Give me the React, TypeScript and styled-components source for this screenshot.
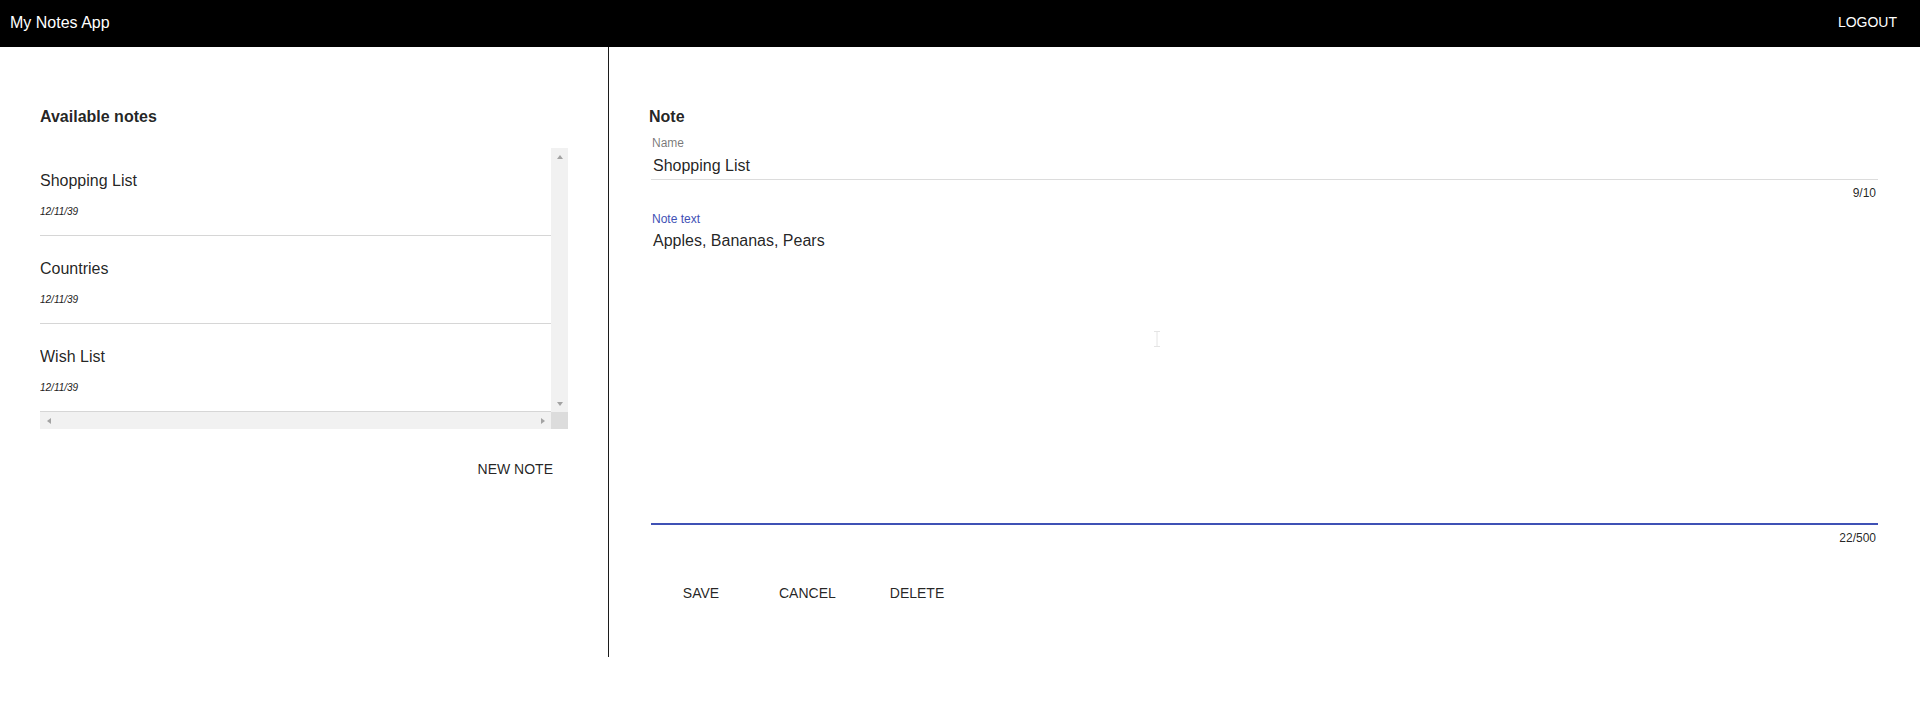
import React, { useState } from "react";
import styled, { createGlobalStyle } from "styled-components";

const GlobalStyle = createGlobalStyle`
	body {
		margin: 0;
		background: #fff;
		font-family: "Liberation Sans", Arial, Helvetica, sans-serif;
		color: rgba(0, 0, 0, 0.87);
	}
	* {
		box-sizing: border-box;
	}
`;

const notes = [
	{ id: 1, name: "Shopping List", nameCount: 9, date: "12/11/39", text: "Apples, Bananas, Pears" },
	{ id: 2, name: "Countries", nameCount: 9, date: "12/11/39", text: "" },
	{ id: 3, name: "Wish List", nameCount: 9, date: "12/11/39", text: "" },
];

const TopBar = styled.header`
	height: 47px;
	background: #000;
	color: #fff;
	display: flex;
	align-items: center;
	justify-content: space-between;
	padding: 0 15px 3px 10px;
`;

const AppTitle = styled.div`
	font-size: 16px;
	line-height: 19px;
`;

const BarButton = styled.button`
	background: none;
	border: 0;
	color: #fff;
	font: inherit;
	font-size: 14px;
	line-height: 19px;
	padding: 0 8px;
	text-transform: uppercase;
	cursor: pointer;
`;

const Main = styled.main`
	display: flex;
	height: 610px;
`;

const NotesPanel = styled.section`
	width: 609px;
	flex-shrink: 0;
	border-right: 1px solid #1c1c1c;
	padding: 58px 40px 0;
`;

const EditorPanel = styled.section`
	flex: 1;
	padding: 58px 40px 0;
`;

const Heading = styled.h2`
	margin: 0;
	font-size: 16px;
	line-height: 24px;
	font-weight: 700;
	color: rgba(0, 0, 0, 0.87);
`;

const ListFrame = styled.div`
	margin-top: 19px;
	width: 528px;
	height: 281px;
	display: grid;
	grid-template-columns: 1fr 17px;
	grid-template-rows: 264px 17px;
`;

const ListBody = styled.ul`
	margin: 0;
	padding: 0;
	list-style: none;
	overflow: hidden;
`;

const NoteItem = styled.li`
	height: 88px;
	padding: 21px 0 15px;
	border-bottom: 1px solid #d6d6d6;
	cursor: pointer;
`;

const NoteTitle = styled.div`
	font-size: 16px;
	line-height: 24px;
	color: rgba(0, 0, 0, 0.87);
`;

const NoteDate = styled.div`
	margin-top: 12px;
	font-size: 10px;
	line-height: 14px;
	font-style: italic;
	color: #222;
`;

const ScrollTrack = styled.div<{ $dir: "v" | "h" }>`
	background: #f1f1f1;
	display: flex;
	flex-direction: ${(p) => (p.$dir === "v" ? "column" : "row")};
	justify-content: space-between;
	align-items: center;
`;

const ScrollCorner = styled.div`
	background: #dcdcdc;
`;

const ArrowBox = styled.div`
	width: 17px;
	height: 17px;
	display: flex;
	align-items: center;
	justify-content: center;
`;

const Arrow = styled.span<{ $to: "up" | "down" | "left" | "right" }>`
	width: 0;
	height: 0;
	border-style: solid;
	border-color: transparent;
	${(p) =>
		p.$to === "up"
			? "border-width: 0 3.5px 4px; border-bottom-color: #a3a3a3;"
			: p.$to === "down"
			? "border-width: 4px 3.5px 0; border-top-color: #a3a3a3;"
			: p.$to === "left"
			? "border-width: 3.5px 4px 3.5px 0; border-right-color: #a3a3a3;"
			: "border-width: 3.5px 0 3.5px 4px; border-left-color: #a3a3a3;"}
`;

const ActionRow = styled.div<{ $align?: string }>`
	display: flex;
	justify-content: ${(p) => p.$align || "flex-start"};
	gap: 38px;
`;

const NewNoteRow = styled(ActionRow)`
	margin-top: 22px;
	padding-right: 7px;
`;

const TextButton = styled.button`
	background: none;
	border: 0;
	min-width: 64px;
	padding: 6px 8px;
	font: inherit;
	font-size: 14px;
	line-height: 24.5px;
	text-transform: uppercase;
	color: rgba(0, 0, 0, 0.87);
	cursor: pointer;
`;

const Field = styled.div<{ $gap?: number }>`
	margin: ${(p) => p.$gap || 0}px 2px 0;
	position: relative;
`;

const FieldLabel = styled.label<{ $focused?: boolean }>`
	display: block;
	font-size: 12px;
	line-height: 14px;
	padding-left: 1px;
	color: ${(p) => (p.$focused ? "#3f51b5" : "rgba(0, 0, 0, 0.54)")};
`;

const NameInput = styled.input`
	display: block;
	width: 100%;
	border: 0;
	border-bottom: 1px solid #dcdcdc;
	outline: none;
	padding: 6px 2px 4px;
	font: inherit;
	font-size: 16px;
	line-height: 19px;
	height: 30px;
	color: rgba(0, 0, 0, 0.87);
`;

const BodyInput = styled.textarea`
	display: block;
	width: 100%;
	height: 299px;
	border: 0;
	border-bottom: 2px solid #3f51b5;
	outline: none;
	resize: none;
	padding: 5px 2px 0;
	font: inherit;
	font-size: 16px;
	line-height: 19px;
	color: rgba(0, 0, 0, 0.87);
`;

const Counter = styled.div`
	margin-top: 3px;
	padding-right: 2px;
	text-align: right;
	font-size: 12px;
	line-height: 20px;
	color: rgba(0, 0, 0, 0.87);
`;

const EditorActions = styled(ActionRow)`
	margin-top: 27px;
	padding-left: 20px;
`;

const Pointer = styled.svg`
	position: absolute;
	left: 502px;
	top: 119px;
	pointer-events: none;
`;

function App() {
	const [selected, setSelected] = useState(notes[0]);
	const [name, setName] = useState(notes[0].name);
	const [nameCount, setNameCount] = useState(notes[0].nameCount);
	const [text, setText] = useState(notes[0].text);

	const pick = (n: typeof notes[number]) => {
		setSelected(n);
		setName(n.name);
		setNameCount(n.nameCount);
		setText(n.text);
	};

	return (
		<>
			<GlobalStyle />
			<TopBar>
				<AppTitle>My Notes App</AppTitle>
				<BarButton>Logout</BarButton>
			</TopBar>
			<Main>
				<NotesPanel>
					<Heading>Available notes</Heading>
					<ListFrame>
						<ListBody>
							{notes.map((n) => (
								<NoteItem key={n.id} onClick={() => pick(n)} aria-selected={n.id === selected.id}>
									<NoteTitle>{n.name}</NoteTitle>
									<NoteDate>{n.date}</NoteDate>
								</NoteItem>
							))}
						</ListBody>
						<ScrollTrack $dir="v">
							<ArrowBox>
								<Arrow $to="up" />
							</ArrowBox>
							<ArrowBox>
								<Arrow $to="down" />
							</ArrowBox>
						</ScrollTrack>
						<ScrollTrack $dir="h">
							<ArrowBox>
								<Arrow $to="left" />
							</ArrowBox>
							<ArrowBox>
								<Arrow $to="right" />
							</ArrowBox>
						</ScrollTrack>
						<ScrollCorner />
					</ListFrame>
					<NewNoteRow $align="flex-end">
						<TextButton>New note</TextButton>
					</NewNoteRow>
				</NotesPanel>
				<EditorPanel>
					<Heading>Note</Heading>
					<Field $gap={7}>
						<FieldLabel>Name</FieldLabel>
						<NameInput
							value={name}
							onChange={(e) => {
								setName(e.target.value);
								setNameCount(e.target.value.length);
							}}
						/>
						<Counter>{nameCount}/10</Counter>
					</Field>
					<Field $gap={9}>
						<FieldLabel $focused>Note text</FieldLabel>
						<BodyInput value={text} maxLength={500} onChange={(e) => setText(e.target.value)} />
						<Pointer width="8" height="16" viewBox="0 0 8 16">
							<path d="M1 0.5h6M4 0.5v15M1 15.5h6" stroke="#e4e4e4" strokeWidth="1" fill="none" />
						</Pointer>
						<Counter>{text.length}/500</Counter>
					</Field>
					<EditorActions>
						<TextButton>Save</TextButton>
						<TextButton>Cancel</TextButton>
						<TextButton>Delete</TextButton>
					</EditorActions>
				</EditorPanel>
			</Main>
		</>
	);
}

export default App;
